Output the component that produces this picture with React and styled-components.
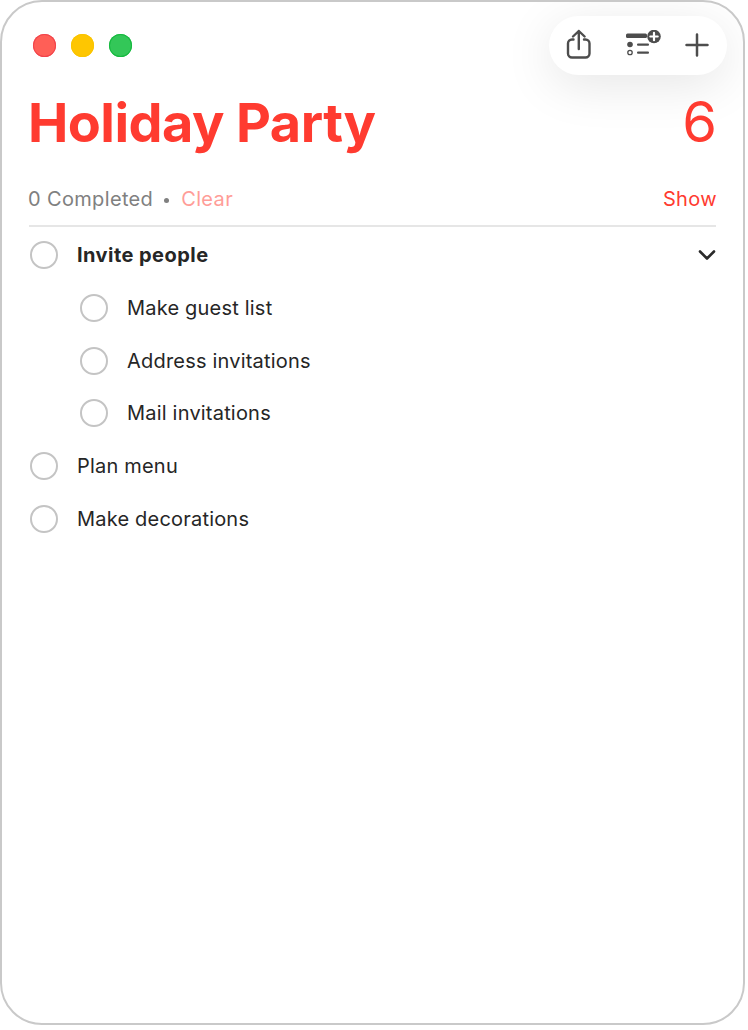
import React from "react";
import styled, { createGlobalStyle } from "styled-components";

const Global = createGlobalStyle`
  html, body { margin: 0; padding: 0; background: #fff; }
  body { font-family: "Inter", "Liberation Sans", sans-serif; -webkit-font-smoothing: antialiased; }
`;

const Win = styled.div`
  box-sizing: border-box;
  width: 745px;
  height: 1025px;
  border: 2px solid #c9c9c9;
  border-radius: 42px;
  background: #fff;
  padding: 13px 27px 0 27px;
  overflow: hidden;
`;

const TopBar = styled.header`
  display: flex;
  align-items: center;
  justify-content: space-between;
  height: 60px;
`;

const Lights = styled.div`
  display: flex;
  gap: 15px;
  padding: 0 0 0 4px;
`;

const Light = styled.span`
  width: 23px;
  height: 23px;
  border-radius: 50%;
  background: ${(p) => p.$fill};
  box-shadow: inset 0 0 0 1px ${(p) => p.$edge};
`;

const Pill = styled.div`
  display: flex;
  align-items: center;
  box-sizing: border-box;
  width: 178px;
  height: 59px;
  margin-right: -11px;
  padding: 0 18px 0 15px;
  justify-content: space-between;
  background: #fff;
  border-radius: 30px;
  box-shadow: 0 10px 50px rgba(0, 0, 0, 0.1);
`;

const ToolIcon = styled.svg`
  display: block;
  color: #4d4d4d;
  flex: none;
  margin-left: ${(p) => p.$shift || 0}px;
`;

const TitleRow = styled.div`
  display: flex;
  align-items: baseline;
  justify-content: space-between;
  margin-top: 12px;
`;

const Title = styled.h1`
  margin: 0 0 0 -1px;
  font-size: 54px;
  line-height: 70px;
  font-weight: 700;
  color: #ff3b30;
  letter-spacing: -0.55px;
`;

const Count = styled.div`
  margin-right: -1px;
  font-size: 56px;
  line-height: 70px;
  font-weight: 400;
  color: #ff3b30;
`;

const SummaryRow = styled.div`
  display: flex;
  align-items: center;
  justify-content: space-between;
  height: 36px;
  margin-top: 23px;
  border-bottom: 2px solid #e6e6e6;
  padding-bottom: 8px;
  font-size: 20px;
  line-height: 24px;
  letter-spacing: 0.35px;
`;

const SummaryLeft = styled.div`
  display: flex;
  align-items: center;
  margin-left: -1px;
`;

const Done = styled.span`
  color: #808080;
`;

const Dot = styled.span`
  width: 5px;
  height: 5px;
  border-radius: 50%;
  background: #808080;
  margin: 2px 12px 0 11px;
`;

const Clear = styled.span`
  color: #ff9d98;
`;

const Show = styled.span`
  margin-right: -1px;
  color: #ff3b30;
`;

const List = styled.ul`
  list-style: none;
  margin: 0;
  padding: 2px 0 0;
`;

const Row = styled.li`
  display: flex;
  align-items: center;
  height: 52.7px;
  padding-left: ${(p) => (p.$sub ? 51 : 1)}px;
  font-size: 20px;
  color: #262626;
  font-weight: ${(p) => (p.$bold ? 700 : 400)};
  letter-spacing: ${(p) => (p.$bold ? 0.45 : 0.2)}px;
`;

const Circle = styled.span`
  box-sizing: border-box;
  width: 28px;
  height: 28px;
  border-radius: 50%;
  border: 2px solid #c4c4c4;
  margin-right: 19px;
  flex: none;
`;

const Label = styled.span`
  flex: 1;
`;

const Chevron = styled.svg`
  display: block;
  flex: none;
`;

const items = [
  { text: "Invite people", bold: true, chevron: true },
  { text: "Make guest list", sub: true },
  { text: "Address invitations", sub: true },
  { text: "Mail invitations", sub: true },
  { text: "Plan menu" },
  { text: "Make decorations" },
];

export default function App() {
  return (
    <>
      <Global />
      <Win>
        <TopBar>
          <Lights>
            <Light $fill="#ff5f57" $edge="#f1444c" />
            <Light $fill="#fec601" $edge="#fac400" />
            <Light $fill="#33c758" $edge="#16b93f" />
          </Lights>
          <Pill>
            <ToolIcon width="30" height="34" viewBox="0 0 30 34" fill="none" stroke="currentColor" strokeWidth="2.4" strokeLinecap="round" strokeLinejoin="round">
              <path d="M9.5 11.5H8a4 4 0 0 0-4 4V25.5a4 4 0 0 0 4 4H21.500a4 4 0 0 0 4-4V15.500a4 4 0 0 0-4-4H20" />
              <path d="M14.800 21V3M9 8.500l5.800-5.500 5.800 5.500" />
            </ToolIcon>
            <ToolIcon $shift={8} width="38" height="30" viewBox="0 0 38 30" fill="none">
              <rect x="1" y="3.500" width="21" height="4.500" rx="1.500" fill="currentColor" />
              <circle cx="5" cy="14.500" r="2.800" fill="currentColor" />
              <rect x="12" y="13.500" width="12" height="2.200" rx="1" fill="currentColor" />
              <circle cx="5" cy="22.500" r="2.200" stroke="currentColor" strokeWidth="1.300" />
              <rect x="12" y="21.500" width="12" height="2.200" rx="1" fill="currentColor" />
              <circle cx="29" cy="6.500" r="6.800" fill="currentColor" />
              <path d="M29 2.800v7.400M25.300 6.500h7.400" stroke="#fff" strokeWidth="2.200" strokeLinecap="round" />
            </ToolIcon>
            <ToolIcon width="24" height="24" viewBox="0 0 24 24" fill="none" stroke="currentColor" strokeWidth="2.500" strokeLinecap="round">
              <path d="M12 1.500v21M1.500 12h21" />
            </ToolIcon>
          </Pill>
        </TopBar>
        <TitleRow>
          <Title>Holiday Party</Title>
          <Count>6</Count>
        </TitleRow>
        <SummaryRow>
          <SummaryLeft>
            <Done>0 Completed</Done>
            <Dot />
            <Clear>Clear</Clear>
          </SummaryLeft>
          <Show>Show</Show>
        </SummaryRow>
        <List>
          {items.map((it) => (
            <Row key={it.text} $sub={it.sub} $bold={it.bold}>
              <Circle />
              <Label>{it.text}</Label>
              {it.chevron && (
                <Chevron width="18" height="12" viewBox="0 0 18 12" fill="none" stroke="#2a2a2a" strokeWidth="2.600" strokeLinecap="round" strokeLinejoin="round">
                  <path d="M2 2.500l7 7 7-7" />
                </Chevron>
              )}
            </Row>
          ))}
        </List>
      </Win>
    </>
  );
}
